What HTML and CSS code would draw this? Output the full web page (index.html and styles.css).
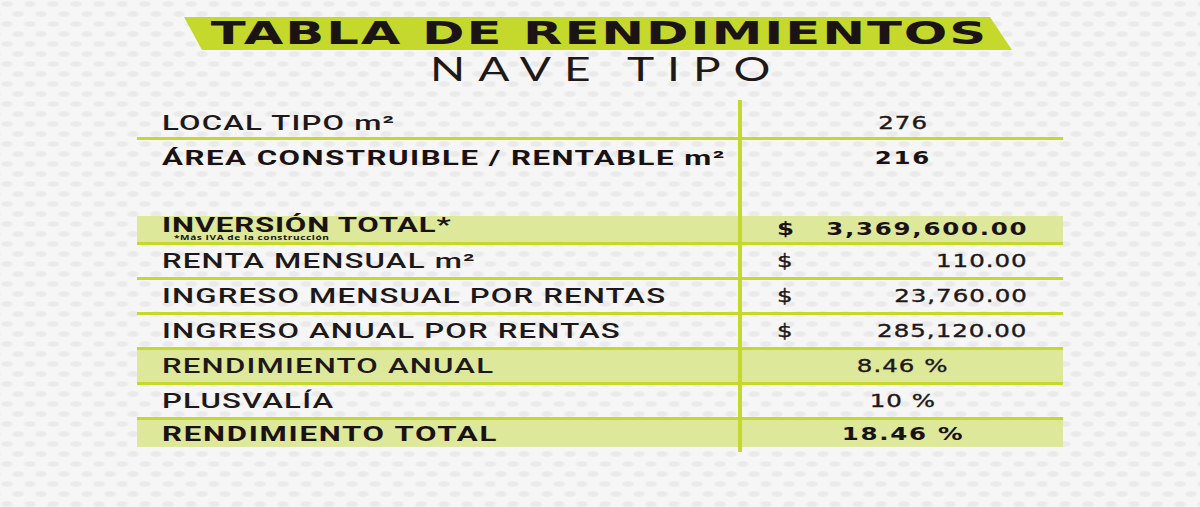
FILE: index.html
```html
<!DOCTYPE html>
<html lang="es">
<head>
<meta charset="utf-8">
<title>Tabla de rendimientos</title>
<link rel="stylesheet" href="styles.css">
</head>
<body>
<div class="page">
  <header class="header">
    <div class="banner"><h1 class="title">TABLA DE RENDIMIENTOS</h1></div>
    <div class="subtitle"><span class="sub-text">NAVE TIPO</span></div>
  </header>

  <section class="tabla">
    <div class="row sp-top"><div class="lbl"></div><div class="val"></div></div>

    <div class="row lined r-local">
      <div class="lbl"><span class="t lab">LOCAL TIPO m²</span></div>
      <div class="val center"><span class="t c num">276</span></div>
    </div>

    <div class="row r-area">
      <div class="lbl"><span class="t lab bold area">ÁREA CONSTRUIBLE / RENTABLE m²</span></div>
      <div class="val center"><span class="t c num bold">216</span></div>
    </div>

    <div class="row sp-mid"><div class="lbl"></div><div class="val"></div></div>

    <div class="row lined hl r-inv">
      <div class="lbl stack">
        <span class="t lab bold inv">INVERSIÓN TOTAL*</span>
        <span class="t note">*Más IVA de la construcción</span>
      </div>
      <div class="val money"><span class="t num bold">$</span><span class="t r num bold amt">3,369,600.00</span></div>
    </div>

    <div class="row lined r-std">
      <div class="lbl"><span class="t lab">RENTA MENSUAL m²</span></div>
      <div class="val money"><span class="t num">$</span><span class="t r num amt">110.00</span></div>
    </div>

    <div class="row lined r-std">
      <div class="lbl"><span class="t lab">INGRESO MENSUAL POR RENTAS</span></div>
      <div class="val money"><span class="t num">$</span><span class="t r num amt">23,760.00</span></div>
    </div>

    <div class="row lined r-std">
      <div class="lbl"><span class="t lab">INGRESO ANUAL POR RENTAS</span></div>
      <div class="val money"><span class="t num">$</span><span class="t r num amt">285,120.00</span></div>
    </div>

    <div class="row lined hl r-std">
      <div class="lbl"><span class="t lab">RENDIMIENTO ANUAL</span></div>
      <div class="val center"><span class="t c num">8.46 %</span></div>
    </div>

    <div class="row lined r-std">
      <div class="lbl"><span class="t lab">PLUSVALÍA</span></div>
      <div class="val center"><span class="t c num">10 %</span></div>
    </div>

    <div class="row hl r-total">
      <div class="lbl"><span class="t lab bold">RENDIMIENTO TOTAL</span></div>
      <div class="val center"><span class="t c num bold">18.46 %</span></div>
    </div>

    <div class="row sp-bot"><div class="lbl"></div><div class="val"></div></div>
  </section>
</div>
</body>
</html>
```
FILE: styles.css
```css
* {
  box-sizing: border-box;
  margin: 0;
  padding: 0;
}

html, body {
  width: 1200px;
  height: 507px;
  overflow: hidden;
}

body {
  background-color: #f6f6f6;
  background-image:
    radial-gradient(ellipse 7px 3.5px at 7px 4px, #eaeaea 60%, rgba(234, 234, 234, 0) 100%),
    radial-gradient(ellipse 7px 3.5px at 7px 4px, #eaeaea 60%, rgba(234, 234, 234, 0) 100%);
  background-size: 23px 20px, 23px 20px;
  background-position: 0 0, 11px 10px;
  font-family: "Roboto", "Open Sans", sans-serif;
  color: #1e1818;
}

.page {
  width: 1200px;
}

/* ---------- header ---------- */
.header {
  padding-top: 17px;
}

.banner {
  width: 828px;
  height: 33px;
  margin-left: 184px;
  background: #c5d82c;
  clip-path: polygon(0 0, 806px 0, 100% 100%, 18px 100%);
  display: flex;
  align-items: center;
  justify-content: center;
}

.title {
  display: inline-block;
  font-family: "DejaVu Sans", sans-serif;
  font-weight: 700;
  font-size: 32px;
  line-height: 33px;
  letter-spacing: 1.2px;
  padding-left: 1.2px;
  color: #1c1414;
  transform: scaleX(1.6);
  transform-origin: center center;
  white-space: nowrap;
}

.subtitle {
  text-align: center;
  height: 40px;
  padding-top: 1px;
}

.sub-text {
  display: inline-block;
  font-family: "Lato", "Open Sans", sans-serif;
  font-weight: 400;
  font-size: 32px;
  line-height: 36px;
  letter-spacing: 9px;
  padding-left: 9px;
  color: #1e1818;
  transform: scaleX(1.44);
  transform-origin: center center;
}

/* ---------- table ---------- */
.tabla {
  margin-left: 137px;
  width: 926px;
  margin-top: 10px;
}

.row {
  display: flex;
}

.lbl {
  width: 601px;
  padding-left: 25px;
  display: flex;
  align-items: center;
}

.val {
  flex: 1;
  border-left: 4px solid #c5d82c;
  display: flex;
  align-items: center;
  padding: 0 36px 0 35px;
}

.val.center {
  justify-content: center;
  padding: 0;
}

.val.money .amt {
  margin-left: auto;
}

.row.lined {
  border-bottom: 3px solid #c5d82c;
}

.row.hl {
  background: #dde89b;
}

.sp-top { height: 9px; }
.r-local { height: 31px; }
.r-area { height: 35px; }
.sp-mid { height: 41px; }
.r-inv { height: 29px; }
.r-std { height: 35px; }
.r-total { height: 27px; }
.sp-bot { height: 5px; }

/* ---------- text ---------- */
.t {
  display: inline-block;
  white-space: nowrap;
  transform: scaleX(1.44);
  transform-origin: left center;
}

.t.r {
  transform-origin: right center;
}

.t.c {
  transform-origin: center center;
}

.t.lab {
  transform: scaleX(1.56);
}

.lab {
  font-family: "Roboto", "Open Sans", sans-serif;
  font-weight: 500;
  font-size: 20px;
  line-height: 22px;
  letter-spacing: 0.75px;
  color: #1e1818;
}

.lab.bold {
  font-weight: 700;
  letter-spacing: 1.1px;
  color: #1a1212;
}

.lab.area {
  letter-spacing: 0.95px;
}

.lbl.stack {
  flex-direction: column;
  align-items: flex-start;
  justify-content: flex-start;
}

.lab.inv {
  line-height: 16px;
  margin-top: 1px;
  letter-spacing: 0.5px;
}

.note {
  font-family: "Open Sans", sans-serif;
  font-weight: 700;
  font-size: 7px;
  line-height: 8px;
  margin-top: 1px;
  margin-left: 12px;
  letter-spacing: 0.4px;
  color: #1a1212;
}

.num {
  font-family: "DejaVu Sans", "Verdana", sans-serif;
  font-size: 17px;
  line-height: 20px;
  letter-spacing: 0.7px;
  color: #1e1818;
  -webkit-text-stroke: 0.35px #1e1818;
}

.num.bold {
  font-weight: 700;
  letter-spacing: 1.2px;
  color: #1a1212;
  -webkit-text-stroke: 0;
}

.t.r.amt {
  margin-right: -0.7px;
}

.t.r.amt.bold {
  margin-right: -1.2px;
}

.t.c.num {
  padding-left: 0.7px;
}

.t.c.num.bold {
  padding-left: 1.2px;
}
```
